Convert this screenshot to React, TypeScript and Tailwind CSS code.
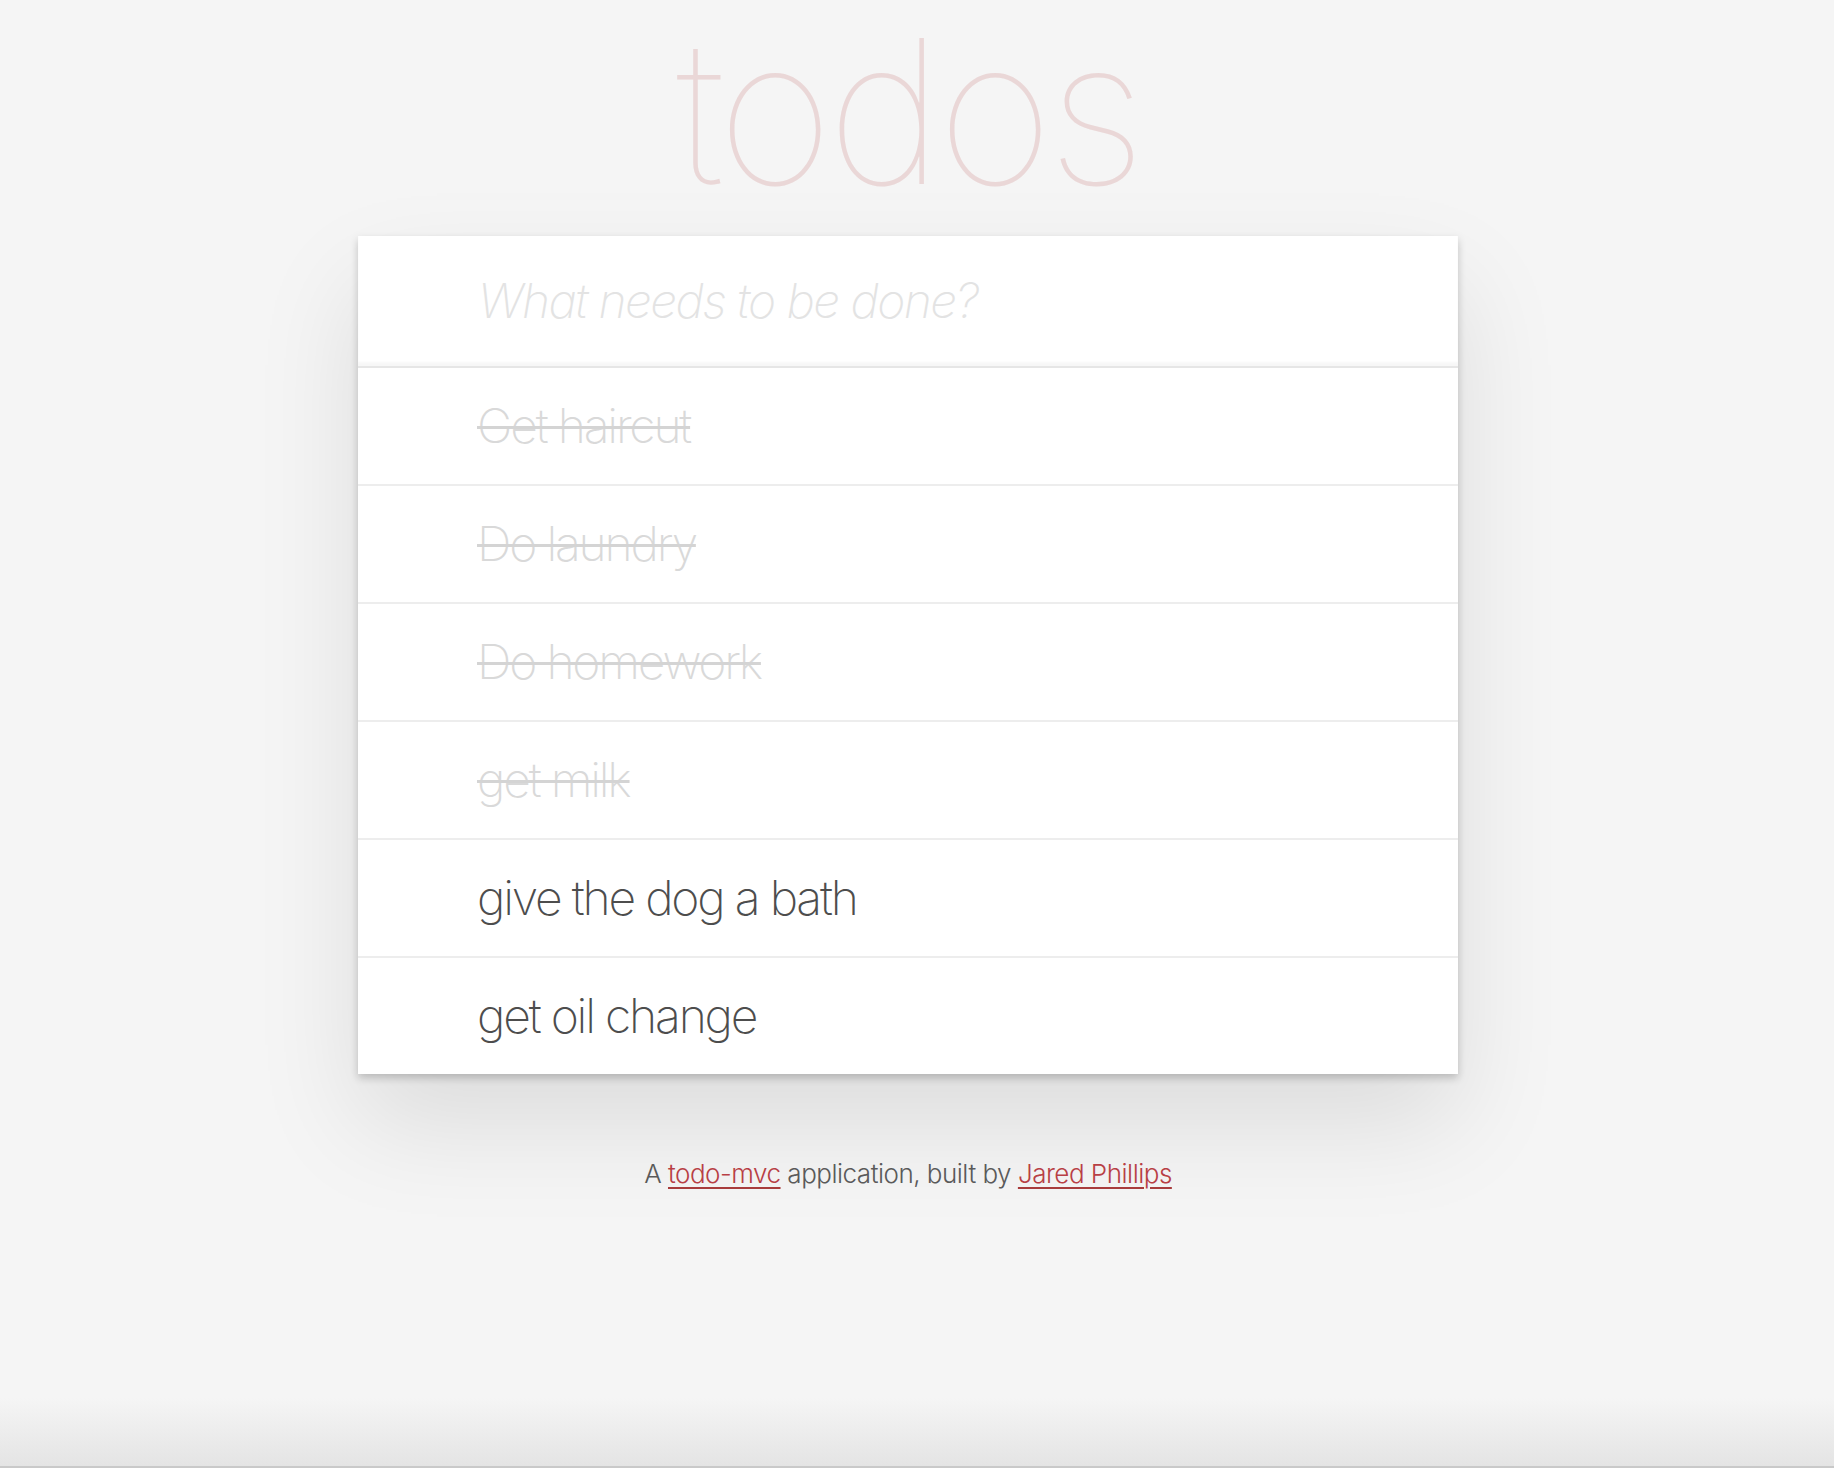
const todos = [
  { title: "Get haircut", completed: true },
  { title: "Do laundry", completed: true },
  { title: "Do homework", completed: true },
  { title: "get milk", completed: true },
  { title: "give the dog a bath", completed: false },
  { title: "get oil change", completed: false },
];

const font = { fontFamily: 'Inter, "Helvetica Neue", "Liberation Sans", sans-serif' };

const App = () => {
  return (
    <div className="min-h-screen bg-[#f5f5f5] flex flex-col" style={font}>
      <main className="flex-1 flex flex-col items-center pr-[18px]">
        <h1 className="h-[236px] text-[200px] leading-[222px] font-thin text-[#ead7d7] tracking-[-6px]">
          todos
        </h1>
        <section className="w-[1100px] bg-white shadow-[0_4px_8px_0_rgba(0,0,0,0.2),0_50px_100px_0_rgba(0,0,0,0.1)]">
          <div className="h-[130px] pl-[120px] flex items-center shadow-[inset_0_-4px_2px_rgba(0,0,0,0.03)]">
            <span className="text-[48px] italic font-extralight text-[#e3e3e3] tracking-[-1.6px]">
              What needs to be done?
            </span>
          </div>
          <ul className="border-t-2 border-[#e6e6e6]">
            {todos.map((todo) => (
              <li
                key={todo.title}
                className="h-[118px] last:h-[116px] pl-[119px] flex items-center border-b-2 last:border-b-0 border-[#ededed]"
              >
                <span
                  className={
                    todo.completed
                      ? "text-[48px] font-extralight tracking-[-2.2px] text-[#d9d9d9] line-through decoration-[#d4d4d4] decoration-[3px]"
                      : "text-[48px] font-extralight tracking-[-2.2px] text-[#4d4d4d]"
                  }
                >
                  {todo.title}
                </span>
              </li>
            ))}
          </ul>
        </section>
        <footer className="mt-[80px] text-[26px] font-light tracking-[-0.5px] text-[#5a5a5a]">
          A{" "}
          <a href="#" className="text-[#b83f45] underline decoration-2 decoration-[#a83c3c] underline-offset-4">
            todo-mvc
          </a>{" "}
          application, built by{" "}
          <a href="#" className="text-[#b83f45] underline decoration-2 decoration-[#a83c3c] underline-offset-4">
            Jared Phillips
          </a>
        </footer>
      </main>
      <div className="h-[70px] bg-gradient-to-b from-[#f5f5f5] to-[#e4e4e4] border-b-2 border-[#c9c9c9]" />
    </div>
  );
};

export default App;
